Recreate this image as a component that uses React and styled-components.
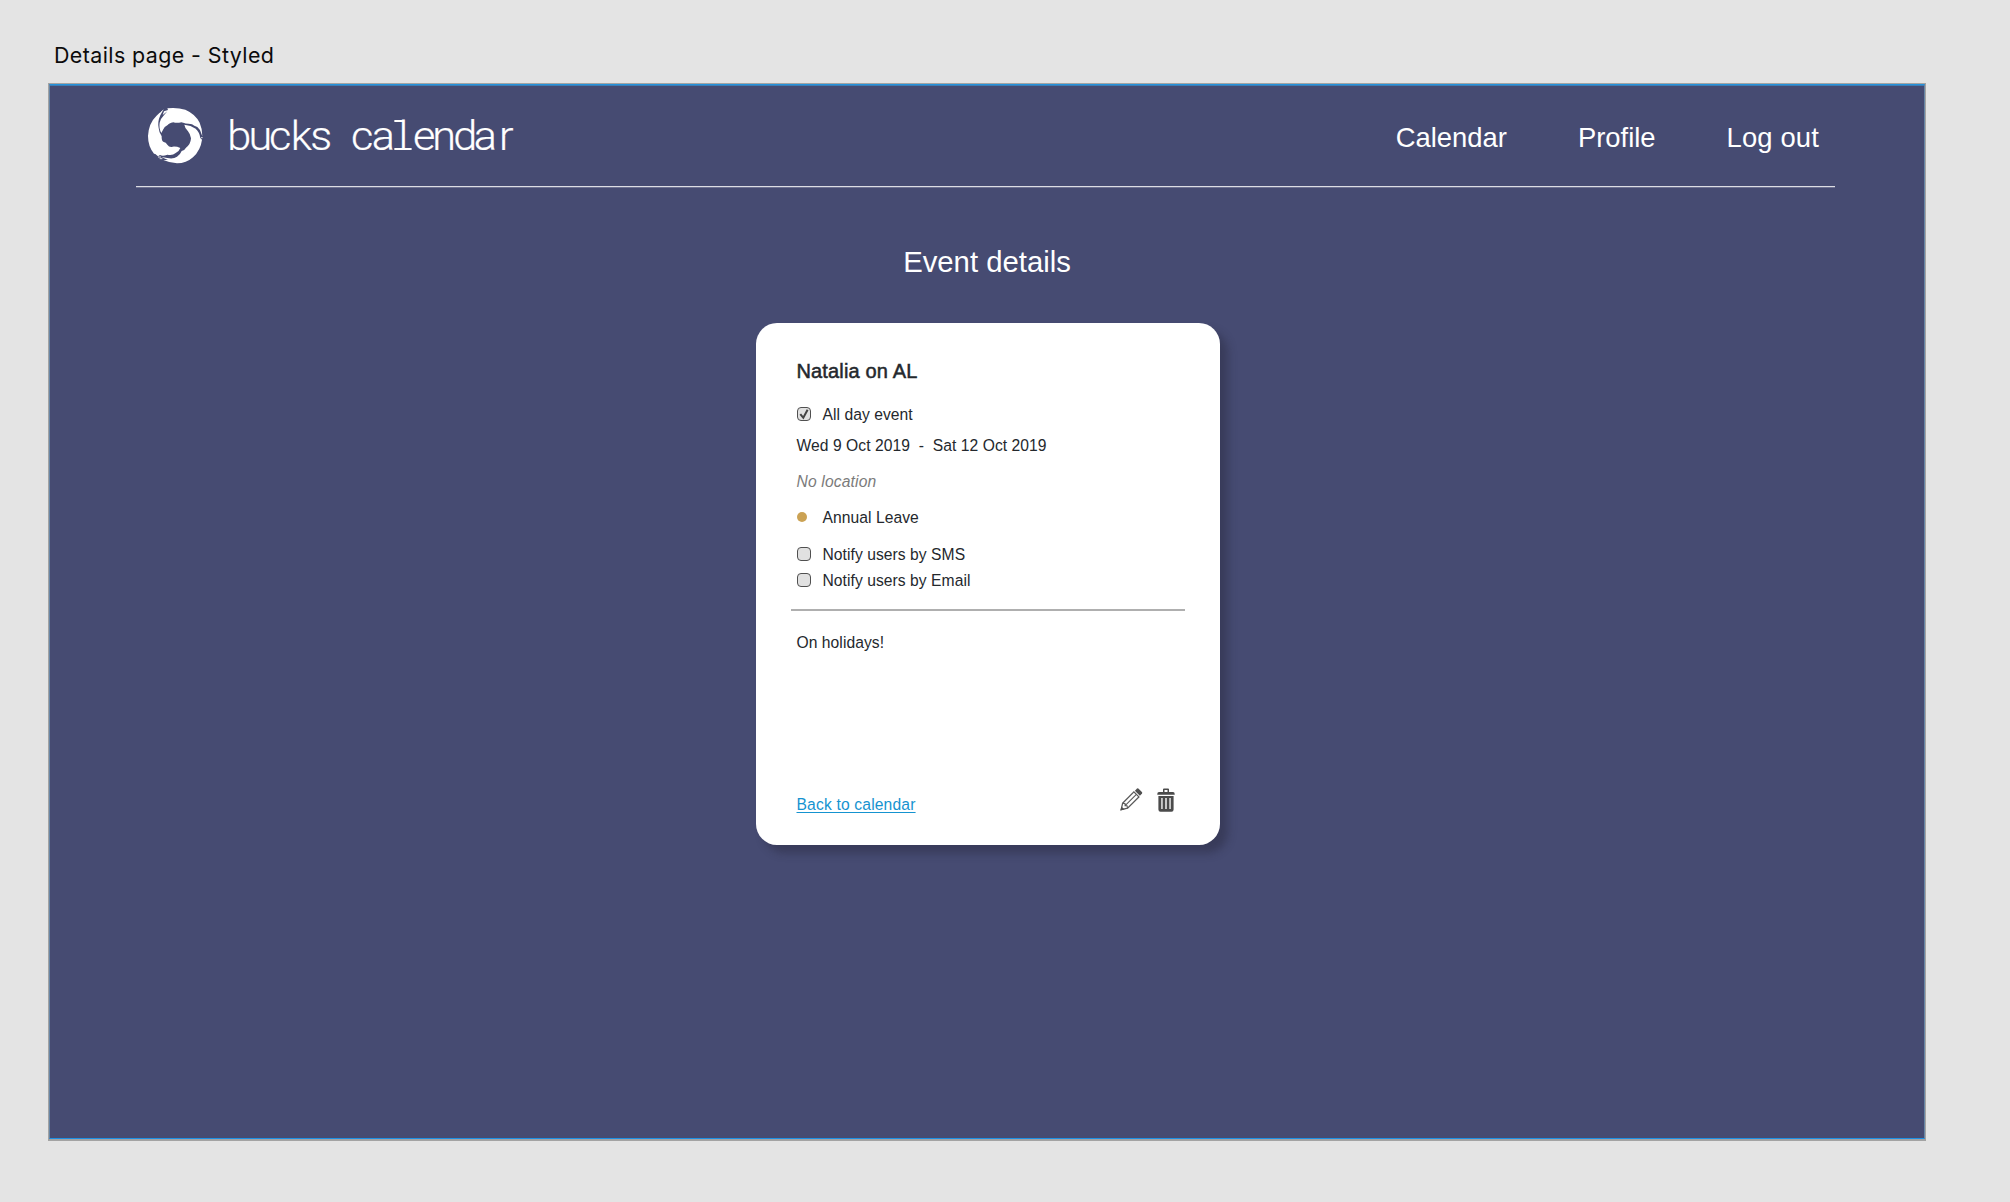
import React from "react";
import styled, { createGlobalStyle } from "styled-components";

const Global = createGlobalStyle`
  *, *::before, *::after { box-sizing: border-box; }
  body { margin: 0; background: #e4e4e4; }
`;
const sans = `"Liberation Sans", Arial, sans-serif`;

const Canvas = styled.div`
  width: 2010px;
  height: 1202px;
  padding: 40px 0 0 48px;
  background: #e4e4e4;
  font-family: ${sans};
  overflow: hidden;
`;
const BoardName = styled.div`
  height: 43px;
  padding-left: 6px;
  font: 400 21.4px/31px Inter, sans-serif;
  letter-spacing: 0.42px;
  color: #0b0b0b;
  white-space: pre;
`;
const Frame = styled.div`
  width: 1878px;
  height: 1058px;
  padding: 1px 1px 2px;
  background: #a3a3a3;
`;
const Board = styled.main`
  height: 1055px;
  border: 1px solid #6886a6;
  border-top: 1px solid #2492dc;
  border-bottom: 1px solid #1c90e6;
  background: #464b72;
  box-shadow: inset 0 1px 0 #3b7cb4;
  display: flex;
  flex-direction: column;
  align-items: center;
`;
const Header = styled.header`
  width: 1699px;
  height: 102px;
  margin-right: 3px;
  padding: 0 16px 0 11px;
  display: flex;
  justify-content: space-between;
  border-bottom: 1px solid #dcdde4;
  box-shadow: 0 1px 0 #6f7291;
`;
const Brand = styled.div`
  display: flex;
  align-items: flex-start;
  padding-top: 22px;
`;
const BrandName = styled.div`
  display: flex;
  margin-left: 25px;
  font: 300 40px/59px Roboto, sans-serif;
  color: #fff;
`;
const Cell = styled.span`
  position: relative;
  width: 20.5px;
  display: flex;
  justify-content: center;
  white-space: pre;
  -webkit-text-stroke: 0.2px #fff;
  transform: scaleX(1.08);
  ${(p) => p.$slab && `
    &::before, &::after {
      content: "";
      position: absolute;
      height: 2px;
      background: #fff;
    }
    &::before { left: 2px; width: 9px; top: 13px; }
    &::after { left: 2px; width: 16px; top: 41px; }
  `}
`;
const Nav = styled.nav`
  display: flex;
  gap: 71px;
  padding-top: 36px;
`;
const NavLink = styled.a`
  font-size: 27.4px;
  line-height: 34px;
  color: #fff;
  &:last-child { letter-spacing: 0.15px; }
`;
const Heading = styled.h1`
  margin: 56px 0 0;
  font-weight: 400;
  font-size: 29.3px;
  line-height: 38px;
  color: #fff;
`;
const Card = styled.section`
  width: 464px;
  height: 522px;
  margin: 42px 0 0 1px;
  padding: 36px 34px 30px 41px;
  border-radius: 21px;
  background: #fff;
  box-shadow: 8px 8px 8px rgba(38, 38, 58, 0.42);
  display: flex;
  flex-direction: column;
  color: #24282d;
  font-size: 15.65px;
  letter-spacing: 0.05px;
  line-height: 20px;
`;
const EventName = styled.h2`
  margin: 0;
  font-weight: 400;
  font-size: 20px;
  letter-spacing: 0.15px;
  line-height: 24px;
  -webkit-text-stroke: 0.5px #24282d;
`;
const Row = styled.div`
  height: 20px;
  margin-top: ${(p) => p.$gap}px;
  display: flex;
  align-items: flex-start;
  white-space: pre;
`;
const Marker = styled.span`
  width: 26px;
  display: flex;
  padding-top: 2px;
`;
const Muted = styled.em`
  color: #7b7b7b;
  letter-spacing: 0.15px;
`;
const Box = styled.span`
  width: 14px;
  height: 14px;
  border: 1px solid #505050;
  border-radius: 4px;
  background: #e1e1e1;
  display: block;
  svg { display: block; }
`;
const Dot = styled.span`
  width: 10px;
  height: 10px;
  margin-top: 2px;
  border-radius: 50%;
  background: #cba254;
`;
const Rule = styled.hr`
  width: 394px;
  height: 2px;
  margin: 18px 0 0 -6px;
  border: 0;
  background: #afafaf;
  flex: none;
`;
const Footer = styled.footer`
  margin-top: auto;
  display: flex;
  justify-content: space-between;
  align-items: flex-end;
  padding-right: 11px;
`;
const BackLink = styled.a`
  color: #1593d0;
  letter-spacing: 0.16px;
  text-decoration: underline;
  text-decoration-thickness: 1px;
  text-underline-offset: 2px;
  text-decoration-skip-ink: none;
`;
const Actions = styled.div`
  display: flex;
  gap: 14px;
  padding-bottom: 3px;
  svg { display: block; }
`;

const Logo = () => (
  <svg width="57" height="57" viewBox="15 15 171 171">
    <g fill="#fff">
      <path d="M66 28 L78 24 L76 19 Q106 16 130 23 Q160 36 173 62 Q181 80 181 103 L177 92 Q174 82 166 75 Q156 72 150 67 Q128 65 118 61 Q104 64 94 61 Q80 64 77 69 Q66 74 64 82 L58 93 Q50 78 53 62 Q55 50 67 38 L76 28 L62 39 Z" />
      <path d="M62 27 L55 40 Q46 60 50 78 Q51 92 59 103 Q58 117 65 120 Q72 121 76 128 Q82 137 92 134 Q104 133 115 138 Q112 147 101 153 Q91 162 76 158 Q62 164 54 159 L48 163 L40 156 L36 155 Q18 133 18 102 Q20 64 43 42 Q51 32 62 27 Z" />
      <path d="M127 68 Q147 70 161 80 Q173 91 175 108 L180 113 Q176 144 153 166 Q133 184 105 184 Q84 183 64 174 L78 174 L58 165 L76 168 Q94 172 105 164 Q116 156 119 147 Q128 145 132 137 Q146 127 147 109 Q145 96 138 88 Q129 80 127 68 Z" />
    </g>
    <path stroke="#fff" strokeWidth="2.5" d="M48 165h9M53 170h8M177 107h5M56 31l8-7" />
  </svg>
);
const Tick = () => (
  <svg width="12" height="12" viewBox="0 0 12 12">
    <path d="M2.3 6.2 L5.3 9.8 L9.6 1.8" fill="none" stroke="#444" strokeWidth="2" />
  </svg>
);
const Pencil = () => (
  <svg width="23" height="23" viewBox="0 0 23 23" fill="none" stroke="#5a5a5a" strokeWidth="1.3">
    <path d="M2.6 15.2 L13.9 3.9 L18.9 8.9 L7.6 20.2 L1.2 21.6 Z" />
    <path d="M5.1 17.7 L16.4 6.4 M2.6 15.2 L5.1 15.8 V17.7 H7 L7.6 20.2" strokeWidth="1.1" />
    <path d="M.3 22.5 L1.5 18.4 L4.6 21.4 Z" fill="#505050" stroke="none" />
    <path d="M14.9 2.7 L17 .6 Q17.8 0 18.6 .7 L21.9 4 Q22.6 4.8 22 5.6 L19.9 7.7 Z" fill="#505050" stroke="none" />
  </svg>
);
const Trash = () => (
  <svg width="18" height="24" viewBox="0 0 18 24" fill="#4b4b4b">
    <path fillRule="evenodd" d="M6 4 V1.3 Q6 .5 7 .5 H11 Q12 .5 12 1.3 V4 H16 Q17.7 4 17.7 6 V6.8 H.3 V6 Q.3 4 2 4 Z M7.5 2 V4 H10.5 V2 Z" />
    <path fillRule="evenodd" d="M1.4 8 H16.6 V21.5 Q16.6 23.7 14.5 23.7 H3.5 Q1.4 23.7 1.4 21.5 Z M4.3 10 V21 H5.6 V10 Z M8.3 10 V21 H9.7 V10 Z M12.4 10 V21 H13.7 V10 Z" />
  </svg>
);

export default function App() {
  return (
    <Canvas>
      <Global />
      <BoardName>Details page - Styled</BoardName>
      <Frame>
        <Board>
          <Header>
            <Brand>
              <Logo />
              <BrandName>
                {[..."bucks calendar"].map((c, i) => (
                  <Cell key={i} $slab={c === "l"}>{c}</Cell>
                ))}
              </BrandName>
            </Brand>
            <Nav>
              <NavLink>Calendar</NavLink>
              <NavLink>Profile</NavLink>
              <NavLink>Log out</NavLink>
            </Nav>
          </Header>
          <Heading>Event details</Heading>
          <Card>
            <EventName>Natalia on AL</EventName>
            <Row $gap={22}><Marker><Box><Tick /></Box></Marker>All day event</Row>
            <Row $gap={11}>Wed 9 Oct 2019{"  -  "}Sat 12 Oct 2019</Row>
            <Row $gap={16}><Muted>No location</Muted></Row>
            <Row $gap={16}><Marker><Dot /></Marker>Annual Leave</Row>
            <Row $gap={17}><Marker><Box /></Marker>Notify users by SMS</Row>
            <Row $gap={6}><Marker><Box /></Marker>Notify users by Email</Row>
            <Rule />
            <Row $gap={22}>On holidays!</Row>
            <Footer>
              <BackLink>Back to calendar</BackLink>
              <Actions><Pencil /><Trash /></Actions>
            </Footer>
          </Card>
        </Board>
      </Frame>
    </Canvas>
  );
}
